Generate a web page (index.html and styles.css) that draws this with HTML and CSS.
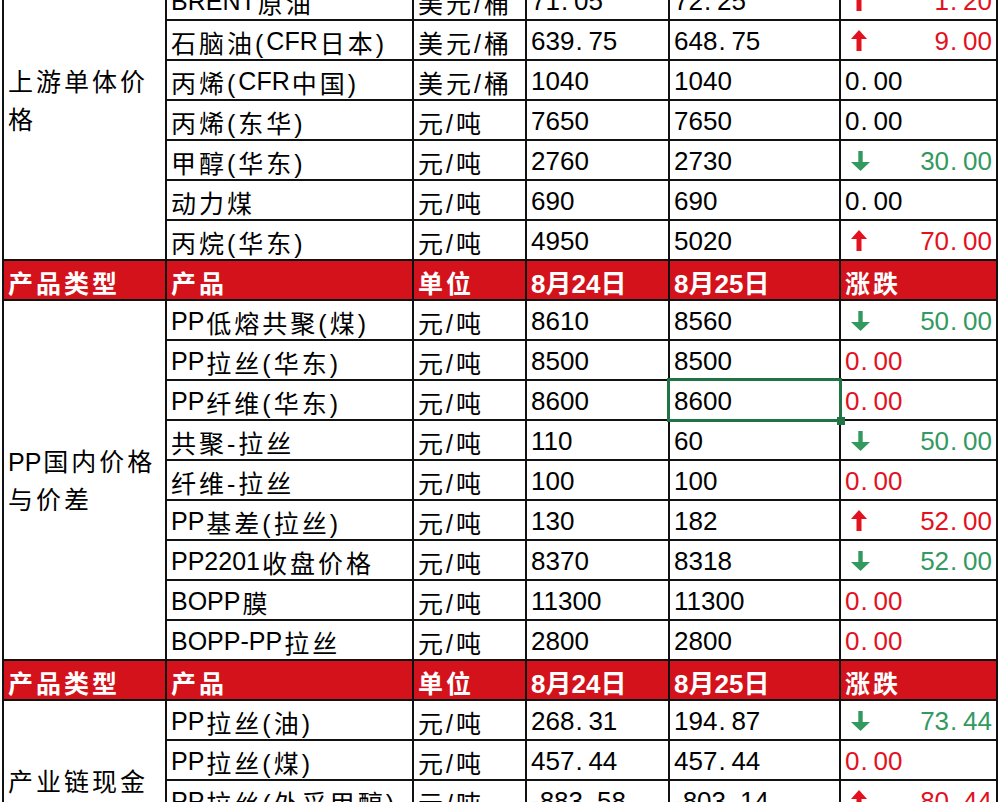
FILE: index.html
```html
<!DOCTYPE html>
<html lang="zh-CN">
<head>
<meta charset="utf-8">
<title>PP 价格表</title>
<link rel="stylesheet" href="styles.css">
</head>
<body>
<div class="sheet">
  <div class="c hd">产品类型</div><div class="c hd">产品</div><div class="c hd">单位</div><div class="c hd num">8月24日</div><div class="c hd num">8月25日</div><div class="c hd">涨跌</div>

  <div class="c cat span8"><span class="cat-t">上游单体价格</span></div>
  <div class="c"><span class="en">WTI</span>原油</div><div class="c">美元/桶</div><div class="c num">67<span class="dp">.</span>54</div><div class="c num">68<span class="dp">.</span>74</div>
  <div class="c chg up"><svg class="ar" viewBox="0 0 16 21" width="16" height="21"><polygon points="8,0 16,9 10.5,9 10.5,21 5.5,21 5.5,9 0,9"/></svg><span class="num">1<span class="dp">.</span>20</span></div>

  <div class="c"><span class="en">BRENT</span>原油</div><div class="c">美元/桶</div><div class="c num">71<span class="dp">.</span>05</div><div class="c num">72<span class="dp">.</span>25</div>
  <div class="c chg up"><svg class="ar" viewBox="0 0 16 21" width="16" height="21"><polygon points="8,0 16,9 10.5,9 10.5,21 5.5,21 5.5,9 0,9"/></svg><span class="num">1<span class="dp">.</span>20</span></div>

  <div class="c">石脑油(<span class="en">CFR</span>日本)</div><div class="c">美元/桶</div><div class="c num">639<span class="dp">.</span>75</div><div class="c num">648<span class="dp">.</span>75</div>
  <div class="c chg up"><svg class="ar" viewBox="0 0 16 21" width="16" height="21"><polygon points="8,0 16,9 10.5,9 10.5,21 5.5,21 5.5,9 0,9"/></svg><span class="num">9<span class="dp">.</span>00</span></div>

  <div class="c">丙烯(<span class="en">CFR</span>中国)</div><div class="c">美元/桶</div><div class="c num">1040</div><div class="c num">1040</div>
  <div class="c chg zero"><span class="num">0<span class="dp">.</span>00</span></div>

  <div class="c">丙烯(东华)</div><div class="c">元/吨</div><div class="c num">7650</div><div class="c num">7650</div>
  <div class="c chg zero"><span class="num">0<span class="dp">.</span>00</span></div>

  <div class="c">甲醇(华东)</div><div class="c">元/吨</div><div class="c num">2760</div><div class="c num">2730</div>
  <div class="c chg down"><svg class="ar" viewBox="0 0 19 20" width="19" height="20"><polygon points="7.3,0 11.7,0 11.7,11 19,11 9.5,20 0,11 7.3,11"/></svg><span class="num">30<span class="dp">.</span>00</span></div>

  <div class="c">动力煤</div><div class="c">元/吨</div><div class="c num">690</div><div class="c num">690</div>
  <div class="c chg zero"><span class="num">0<span class="dp">.</span>00</span></div>

  <div class="c">丙烷(华东)</div><div class="c">元/吨</div><div class="c num">4950</div><div class="c num">5020</div>
  <div class="c chg up"><svg class="ar" viewBox="0 0 16 21" width="16" height="21"><polygon points="8,0 16,9 10.5,9 10.5,21 5.5,21 5.5,9 0,9"/></svg><span class="num">70<span class="dp">.</span>00</span></div>

  <div class="c hd">产品类型</div><div class="c hd">产品</div><div class="c hd">单位</div><div class="c hd num">8月24日</div><div class="c hd num">8月25日</div><div class="c hd">涨跌</div>

  <div class="c cat span9"><span class="cat-t"><span class="en">PP</span>国内价格与价差</span></div>
  <div class="c"><span class="en">PP</span>低熔共聚(煤)</div><div class="c">元/吨</div><div class="c num">8610</div><div class="c num">8560</div>
  <div class="c chg down"><svg class="ar" viewBox="0 0 19 20" width="19" height="20"><polygon points="7.3,0 11.7,0 11.7,11 19,11 9.5,20 0,11 7.3,11"/></svg><span class="num">50<span class="dp">.</span>00</span></div>

  <div class="c"><span class="en">PP</span>拉丝(华东)</div><div class="c">元/吨</div><div class="c num">8500</div><div class="c num">8500</div>
  <div class="c chg zero red"><span class="num">0<span class="dp">.</span>00</span></div>

  <div class="c"><span class="en">PP</span>纤维(华东)</div><div class="c">元/吨</div><div class="c num">8600</div><div class="c num sel">8600</div>
  <div class="c chg zero red"><span class="num">0<span class="dp">.</span>00</span></div>

  <div class="c">共聚-拉丝</div><div class="c">元/吨</div><div class="c num">110</div><div class="c num">60</div>
  <div class="c chg down"><svg class="ar" viewBox="0 0 19 20" width="19" height="20"><polygon points="7.3,0 11.7,0 11.7,11 19,11 9.5,20 0,11 7.3,11"/></svg><span class="num">50<span class="dp">.</span>00</span></div>

  <div class="c">纤维-拉丝</div><div class="c">元/吨</div><div class="c num">100</div><div class="c num">100</div>
  <div class="c chg zero red"><span class="num">0<span class="dp">.</span>00</span></div>

  <div class="c"><span class="en">PP</span>基差(拉丝)</div><div class="c">元/吨</div><div class="c num">130</div><div class="c num">182</div>
  <div class="c chg up"><svg class="ar" viewBox="0 0 16 21" width="16" height="21"><polygon points="8,0 16,9 10.5,9 10.5,21 5.5,21 5.5,9 0,9"/></svg><span class="num">52<span class="dp">.</span>00</span></div>

  <div class="c"><span class="en">PP2201</span>收盘价格</div><div class="c">元/吨</div><div class="c num">8370</div><div class="c num">8318</div>
  <div class="c chg down"><svg class="ar" viewBox="0 0 19 20" width="19" height="20"><polygon points="7.3,0 11.7,0 11.7,11 19,11 9.5,20 0,11 7.3,11"/></svg><span class="num">52<span class="dp">.</span>00</span></div>

  <div class="c"><span class="en">BOPP</span>膜</div><div class="c">元/吨</div><div class="c num">11300</div><div class="c num">11300</div>
  <div class="c chg zero red"><span class="num">0<span class="dp">.</span>00</span></div>

  <div class="c"><span class="en">BOPP-PP</span>拉丝</div><div class="c">元/吨</div><div class="c num">2800</div><div class="c num">2800</div>
  <div class="c chg zero red"><span class="num">0<span class="dp">.</span>00</span></div>

  <div class="c hd">产品类型</div><div class="c hd">产品</div><div class="c hd">单位</div><div class="c hd num">8月24日</div><div class="c hd num">8月25日</div><div class="c hd">涨跌</div>

  <div class="c cat span5"><span class="cat-t">产业链现金流</span></div>
  <div class="c"><span class="en">PP</span>拉丝(油)</div><div class="c">元/吨</div><div class="c num">268<span class="dp">.</span>31</div><div class="c num">194<span class="dp">.</span>87</div>
  <div class="c chg down"><svg class="ar" viewBox="0 0 19 20" width="19" height="20"><polygon points="7.3,0 11.7,0 11.7,11 19,11 9.5,20 0,11 7.3,11"/></svg><span class="num">73<span class="dp">.</span>44</span></div>

  <div class="c"><span class="en">PP</span>拉丝(煤)</div><div class="c">元/吨</div><div class="c num">457<span class="dp">.</span>44</div><div class="c num">457<span class="dp">.</span>44</div>
  <div class="c chg zero red"><span class="num">0<span class="dp">.</span>00</span></div>

  <div class="c"><span class="en">PP</span>拉丝(外采甲醇)</div><div class="c">元/吨</div><div class="c num">-883<span class="dp">.</span>58</div><div class="c num">-803<span class="dp">.</span>14</div>
  <div class="c chg up"><svg class="ar" viewBox="0 0 16 21" width="16" height="21"><polygon points="8,0 16,9 10.5,9 10.5,21 5.5,21 5.5,9 0,9"/></svg><span class="num">80<span class="dp">.</span>44</span></div>

  <div class="c"><span class="en">PP</span>拉丝(外采丙烷)</div><div class="c">元/吨</div><div class="c num">-1020<span class="dp">.</span>00</div><div class="c num">-1100<span class="dp">.</span>00</div>
  <div class="c chg down"><svg class="ar" viewBox="0 0 19 20" width="19" height="20"><polygon points="7.3,0 11.7,0 11.7,11 19,11 9.5,20 0,11 7.3,11"/></svg><span class="num">80<span class="dp">.</span>00</span></div>

  <div class="c"><span class="en">BOPP</span>膜</div><div class="c">元/吨</div><div class="c num">1320<span class="dp">.</span>00</div><div class="c num">1320<span class="dp">.</span>00</div>
  <div class="c chg zero red"><span class="num">0<span class="dp">.</span>00</span></div>
</div>
</body>
</html>
```

FILE: styles.css
```css
html, body {
  margin: 0;
  padding: 0;
  background: #ffffff;
  overflow: hidden;
}

body {
  font-family: "Liberation Sans", "Noto Sans CJK SC", sans-serif;
  font-size: 25px;
  color: #000;
}

.sheet {
  display: grid;
  grid-template-columns: 161px 245px 111px 141px 169px 155px;
  grid-auto-rows: 38px;
  gap: 2px;
  padding: 2px;
  width: max-content;
  margin: -101px 0 0 2px;
  background: #111;
}

.c {
  background: #fff;
  display: flex;
  align-items: center;
  padding: 3px 4px 0 4px;
  letter-spacing: 3px;
  white-space: nowrap;
  overflow: hidden;
  position: relative;
}

.en {
  letter-spacing: 0;
  margin-right: 2px;
}

.num {
  font-size: 26px;
  letter-spacing: 0;
}

.dp {
  display: inline-block;
  width: 14px;
  text-indent: 1px;
}

.hd {
  background: #d3121c;
  color: #fff;
  font-weight: 700;
  letter-spacing: 3px;
}

.hd.num {
  font-size: 26px;
  letter-spacing: 0;
}

.cat {
  white-space: normal;
  line-height: 38px;
  padding-top: 2px;
}

.cat-t {
  display: block;
}

.span8 { grid-row: span 8; }
.span9 { grid-row: span 9; }
.span5 { grid-row: span 5; }

.chg {
  justify-content: space-between;
  letter-spacing: 0;
  padding-left: 10px;
}

.chg.zero {
  justify-content: flex-start;
  padding-left: 4px;
}

.ar {
  display: block;
  margin-top: -2px;
}

.up { color: #e3101e; }
.up .ar { fill: #e3101e; }

.down { color: #33995f; }
.down .ar { fill: #33995f; }

.red { color: #e3101e; }

.sel {
  overflow: visible;
}

.sel::after {
  content: "";
  position: absolute;
  left: -3px;
  top: -3px;
  right: -3px;
  bottom: -3px;
  border: 3px solid #217346;
  pointer-events: none;
  z-index: 2;
}

.sel::before {
  content: "";
  position: absolute;
  right: -6px;
  bottom: -6px;
  width: 8px;
  height: 8px;
  background: #217346;
  z-index: 3;
}
```
